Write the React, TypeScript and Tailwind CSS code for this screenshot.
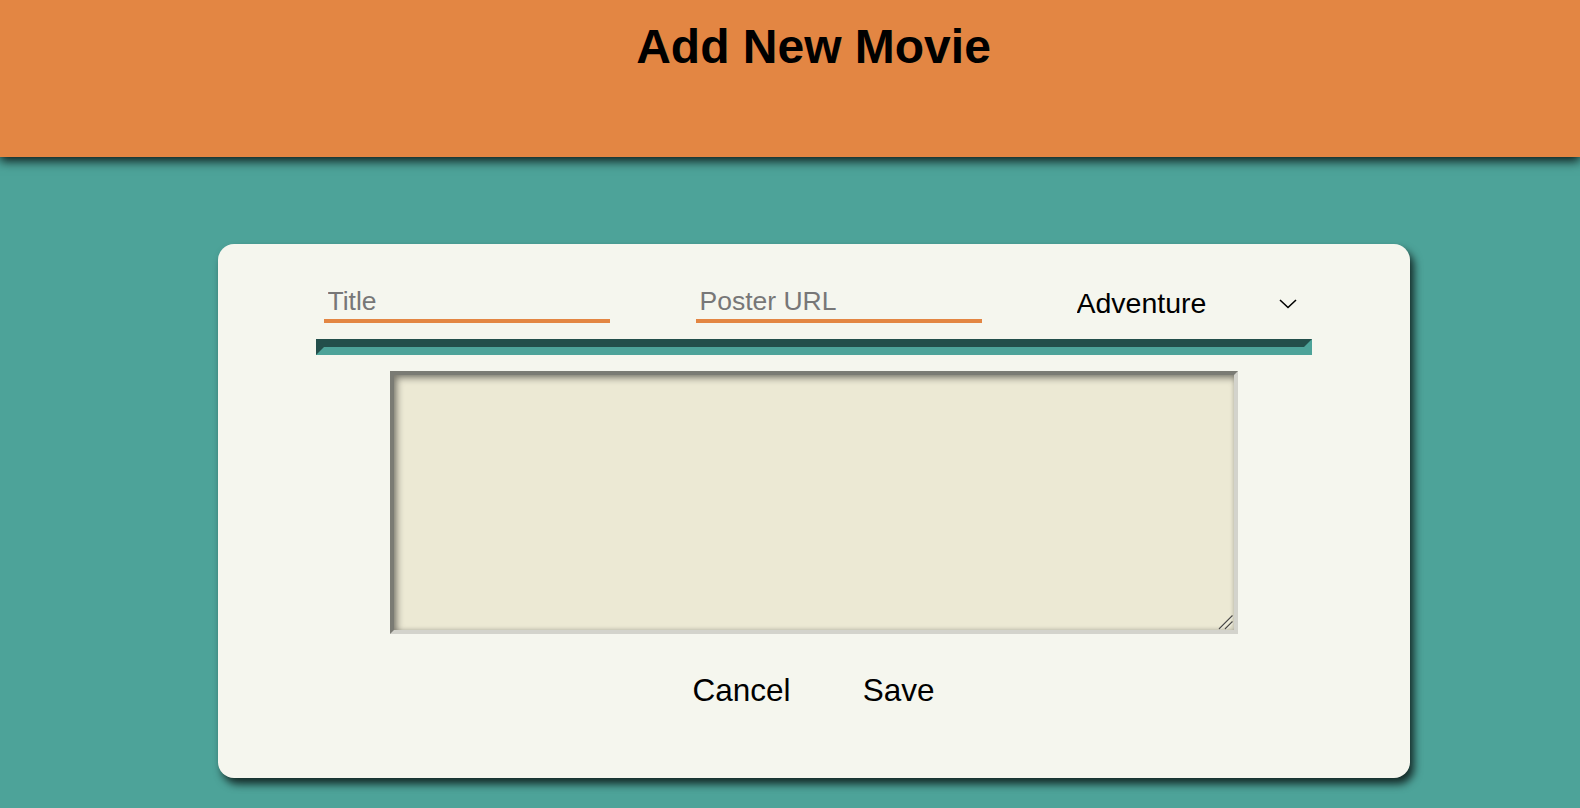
import React from "react";

export default function App() {
  return (
    <div
      className="min-h-screen bg-[#4da399]"
      style={{ fontFamily: '"Liberation Sans", Arial, Helvetica, sans-serif' }}
    >
      <header className="relative z-10 h-[157px] bg-[#e38643] pl-[47px] shadow-[0_4px_10px_rgba(0,0,0,0.85)]">
        <h1 className="pt-[23px] text-center text-[48px] font-bold leading-none text-black">
          Add New Movie
        </h1>
      </header>
      <main className="flex justify-center pl-[47px] pt-[87px]">
        <div className="w-[1192px] rounded-2xl bg-[#f5f6ee] px-[98px] pt-[37px] pb-[69px] shadow-[4px_6px_9px_rgba(0,0,0,0.75)]">
          <div className="flex items-start px-[8px]">
            <input
              type="text"
              placeholder="Title"
              className="w-[286px] border-b-4 border-[#e38643] bg-transparent px-[4px] pt-[5px] pb-[3px] text-[26.5px] leading-[1.15] text-black outline-none placeholder:text-[#777777]"
            />
            <input
              type="text"
              placeholder="Poster URL"
              className="ml-[86px] w-[286px] border-b-4 border-[#e38643] bg-transparent px-[4px] pt-[5px] pb-[3px] text-[26.5px] leading-[1.15] text-black outline-none placeholder:text-[#777777]"
            />
            <div className="relative ml-[86px] mt-[2px] flex-1">
              <select
                defaultValue="Adventure"
                className="h-[40px] w-full appearance-none bg-transparent pl-[9px] text-[28.5px] leading-[1.15] text-black outline-none"
              >
                <option>Adventure</option>
                <option>Action</option>
                <option>Comedy</option>
                <option>Drama</option>
              </select>
              <svg
                className="pointer-events-none absolute right-[7px] top-[16px]"
                width="18"
                height="10"
                viewBox="0 0 18 10"
                fill="none"
              >
                <polyline
                  points="1,1 9,8.5 17,1"
                  stroke="#000"
                  strokeWidth="1.6"
                  fill="none"
                />
              </svg>
            </div>
          </div>
          <div className="mt-[16px] h-[16px] border-8 border-t-[#234f4b] border-l-[#234f4b] border-b-[#4da399] border-r-[#4da399]" />
          <div className="relative mx-auto mt-[16px] h-[263px] w-[848px]">
            <textarea className="block h-full w-full resize-none border-4 border-t-[#7a7b74] border-l-[#7a7b74] border-b-[#d3d3cc] border-r-[#d3d3cc] bg-[#ece9d4] p-2 text-[16px] outline-none shadow-[inset_3px_3px_7px_rgba(0,0,0,0.45),inset_0_0_4px_rgba(0,0,0,0.12)]" />
            <svg
              className="pointer-events-none absolute bottom-[4px] right-[4px]"
              width="18"
              height="18"
              viewBox="0 0 18 18"
              fill="none"
            >
              <line x1="3" y1="17" x2="16.5" y2="3.5" stroke="#4a4a48" strokeWidth="1.3" />
              <line x1="9" y1="17" x2="16.5" y2="9.5" stroke="#4a4a48" strokeWidth="1.3" />
              <line x1="4" y1="17.5" x2="17" y2="4.5" stroke="#ffffff" strokeWidth="0.8" strokeOpacity="0.7" />
              <line x1="10" y1="17.5" x2="17" y2="10.5" stroke="#ffffff" strokeWidth="0.8" strokeOpacity="0.7" />
            </svg>
          </div>
          <div className="mt-[38px] flex justify-center gap-[72px]">
            <button className="text-[31.5px] leading-[1.15] text-black">Cancel</button>
            <button className="text-[31.5px] leading-[1.15] text-black">Save</button>
          </div>
        </div>
      </main>
    </div>
  );
}
